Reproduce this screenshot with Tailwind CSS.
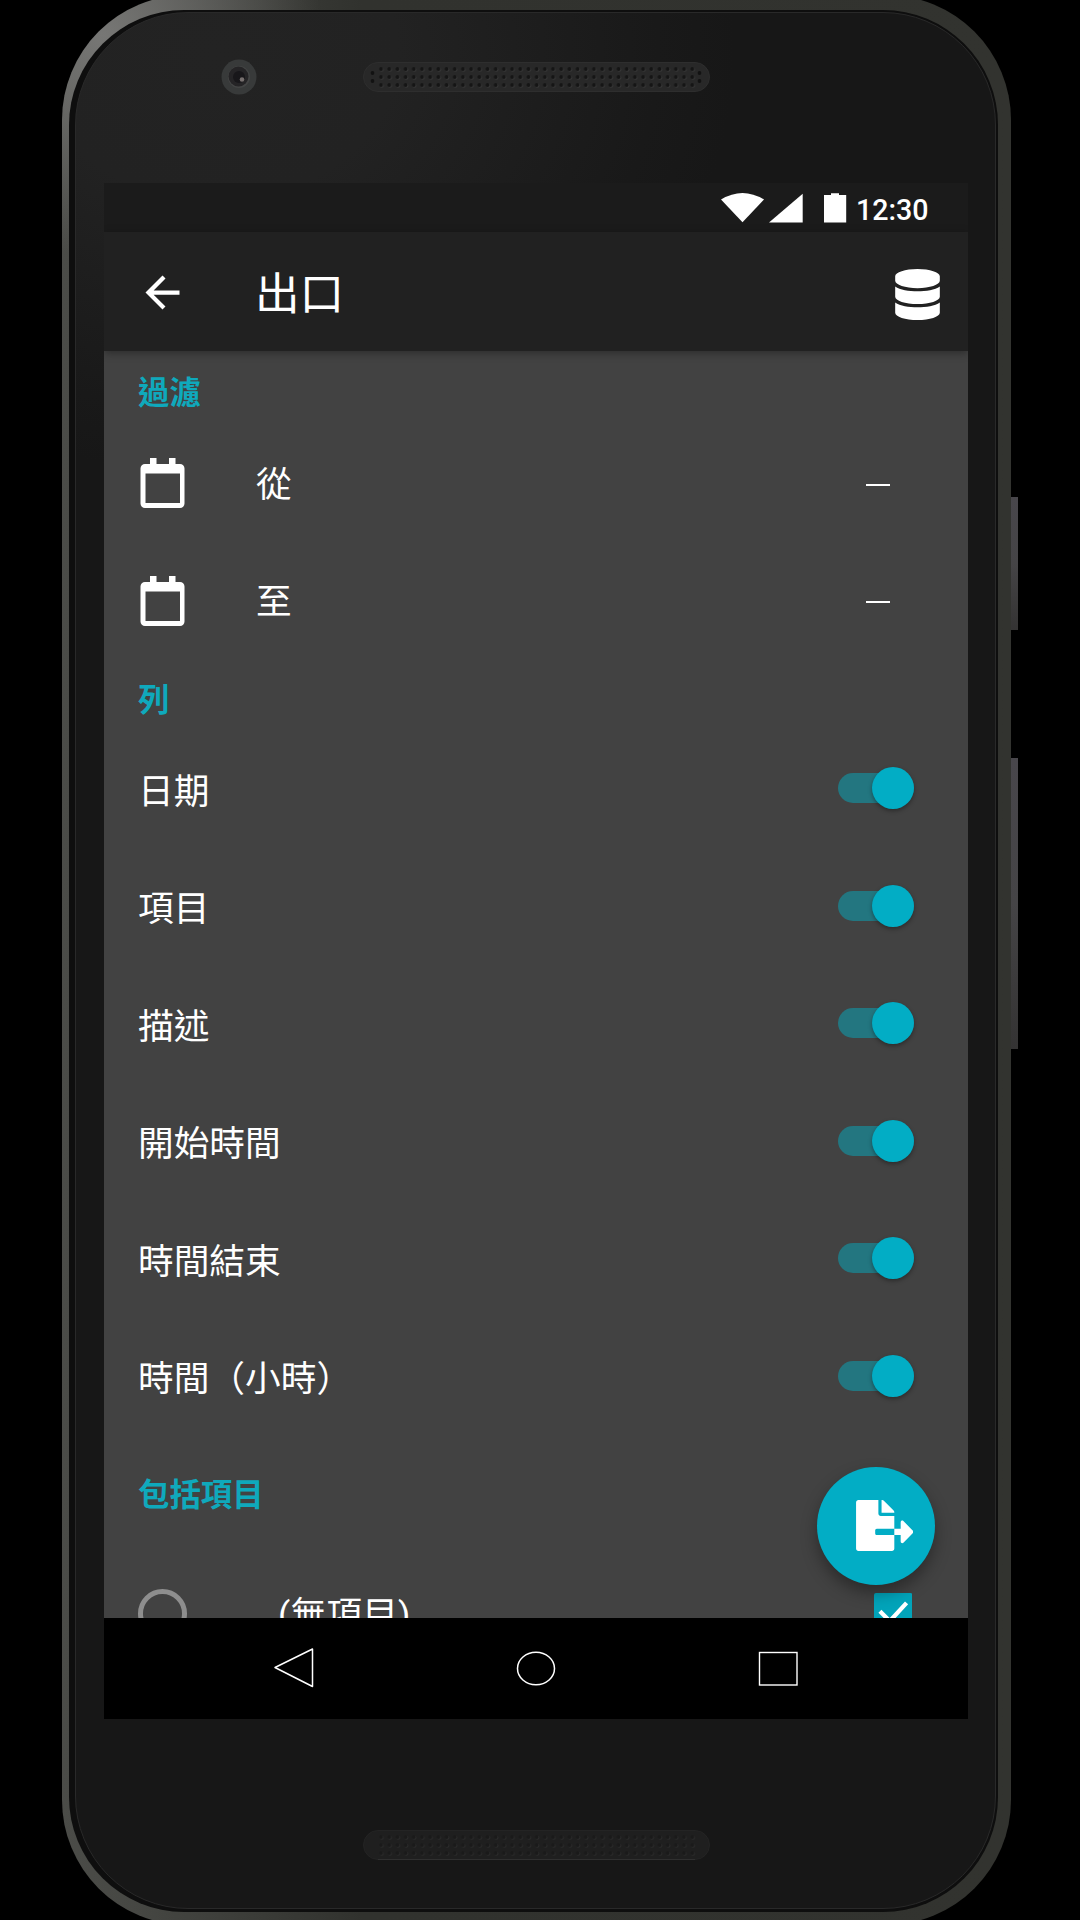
<!DOCTYPE html>
<html lang="zh-Hant">
<head>
<meta charset="utf-8">
<title>出口</title>
<script src="https://cdn.jsdelivr.net/npm/@tailwindcss/browser@4"></script>
</head>
<body class="bg-black">
<svg class="absolute size-0">
  <defs>
    <pattern id="holes" width="8.190" height="8" patternUnits="userSpaceOnUse">
      <circle cx="4.800" cy="4.800" r="2" fill="#363636"/><circle cx="4" cy="4" r="1.900" fill="#151515"/>
    </pattern>
    <symbol id="calendar" viewBox="0 0 44 50">
      <path fill="#fff" fill-rule="evenodd" d="M9.500 0h6.500v6h12.500V0h6.500v6h4.500a4.500 4.500 0 0 1 4.500 4.500v35a4.500 4.500 0 0 1-4.500 4.500h-35a4.500 4.500 0 0 1-4.500-4.500v-35a4.500 4.500 0 0 1 4.500-4.500h5zM5 15.500v29.500h34.500v-29.500z"/>
    </symbol>
  </defs>
</svg>
<div class="relative h-[1920px] w-[1080px] overflow-hidden bg-black font-[Roboto,'Noto_Sans_CJK_TC',sans-serif] text-white">
  <!-- side buttons -->
  <div class="absolute left-[1009px] top-[497px] h-[133px] w-[9px] bg-linear-to-b from-[#48464b] via-[#454446] to-[#343333]"></div>
  <div class="absolute left-[1009px] top-[758px] h-[291px] w-[9px] bg-linear-to-b from-[#48464b] via-[#454446] to-[#343333]"></div>

  <div class="relative -mt-[5px] ml-[62px] h-[1930px] w-[949px] rounded-[125px] bg-[radial-gradient(circle_at_40px_40px,#777775,#77777500_220px),linear-gradient(to_right,#4b4c48,#474844_60px,#31322e_300px,#32332f)] pt-[15px] pr-[13px] pb-[13px] pl-[7px]">
    <div class="h-full rounded-[115px] bg-[#0e0e0e] pt-[2px] pr-[2px] pb-[3px] pl-[6px]">
      <div class="flex h-full flex-col rounded-[113px] border border-[#292929] bg-[#171717] bg-[radial-gradient(ellipse_520px_420px_at_140px_40px,#232323,#222222_35%,#191919_85%,#17171700)] bg-[length:920px_500px] bg-no-repeat pl-[28px]">
        <header class="flex h-[170px] items-start">
          <svg class="mt-[46px] ml-[117px] size-[36px] shrink-0" viewBox="0 0 36 36">
            <circle cx="18" cy="18" r="17.500" fill="#383a3a"/>
            <circle cx="18" cy="18" r="11" fill="#444545"/>
            <circle cx="17.500" cy="17.500" r="10" fill="#252426"/>
            <circle cx="18" cy="18" r="6" fill="#18171a"/>
            <circle cx="21" cy="20.500" r="2.300" fill="#77706f"/>
          </svg>
          <svg class="mt-[49px] ml-[106px] h-[30px] w-[347px]" viewBox="0 0 347 30">
            <rect x=".5" y=".5" width="346" height="29" rx="14.500" fill="#282828" stroke="#2e2e2e"/>
            <g transform="translate(14 3)"><rect width="319.400" height="24" fill="url(#holes)"/></g>
            <g fill="#121212"><circle cx="9.500" cy="11" r="1.900"/><circle cx="9.500" cy="19" r="1.900"/><circle cx="336.500" cy="11" r="1.900"/><circle cx="336.500" cy="19" r="1.900"/></g>
          </svg>
        </header>

        <main class="relative flex h-[1536px] w-[864px] shrink-0 flex-col overflow-hidden bg-[#424242]">
          <!-- status bar -->
          <div class="flex h-[49px] shrink-0 items-start bg-[#1b1b1b] pl-[617px]">
            <svg class="mt-[10px] h-[30px] w-[126px]" viewBox="0 0 126 30" fill="#fff">
              <path d="M0 6.500Q21.500-6.500 43 6.500L21.500 29.200z"/>
              <path d="M48 29.500L81.700 .8v28.700z"/>
              <path d="M103 2h7V.2h8V2h7.200v27.500H103z"/>
            </svg>
            <span class="mt-[10px] ml-[9px] text-[28.600px] leading-[34px] font-medium">12:30</span>
          </div>
          <!-- app bar -->
          <div class="relative z-10 flex h-[119px] shrink-0 items-center bg-[#212121] pl-[33px] pr-[28px] shadow-[0_2px_8px_rgba(0,0,0,0.35)]">
            <svg class="mt-[2px] size-[51px]" viewBox="0 0 24 24" fill="#fff"><path d="M20 11H7.830l5.590-5.590L12 4l-8 8 8 8 1.410-1.410L7.830 13H20v-2z"/></svg>
            <h1 class="mt-[7px] ml-[67px] text-[44.600px] leading-[60px]">出口</h1>
            <svg class="mt-[5px] ml-auto h-[51px] w-[45px]" viewBox="0 0 448 512" fill="#fff"><path d="M448 73.143v45.714C448 159.143 347.667 192 224 192S0 159.143 0 118.857V73.143C0 32.857 100.333 0 224 0s224 32.857 224 73.143zM448 176v102.857C448 319.143 347.667 352 224 352S0 319.143 0 278.857V176c48.125 33.143 136.208 48.572 224 48.572S399.874 209.143 448 176zm0 160v102.857C448 479.143 347.667 512 224 512S0 479.143 0 438.857V336c48.125 33.143 136.208 48.572 224 48.572S399.874 369.143 448 336z"/></svg>
          </div>
          <!-- settings list -->
          <div class="h-[1267px] shrink-0 overflow-hidden pl-[34px] text-[35.700px] leading-[50px]">
            <h2 class="h-[75px] pt-[18px] text-[31.400px] font-bold text-[#0fa9bc]">過濾</h2>
            <div class="flex h-[117.500px] items-center pr-[78px]"><svg class="-mt-[3px] ml-[2px] h-[50px] w-[45px]"><use href="#calendar"/></svg><span class="ml-[71px]">從</span><span class="ml-auto h-[2px] w-[24px] bg-white"></span></div>
            <div class="flex h-[117.500px] items-center pr-[78px]"><svg class="-mt-[3px] ml-[2px] h-[50px] w-[45px]"><use href="#calendar"/></svg><span class="ml-[71px]">至</span><span class="ml-auto h-[2px] w-[24px] bg-white"></span></div>
            <h2 class="h-[68.500px] pt-[14.500px] text-[31.400px] font-bold text-[#0fa9bc]">列</h2>
            <div id="columns"></div>
            <h2 class="h-[120px] pt-[36.500px] text-[31.400px] font-bold text-[#0fa9bc]">包括項目</h2>
            <div class="flex h-[117.500px] items-center pr-[56px]">
              <span class="size-[49px] rounded-full border-[5px] border-[#8e8e8e]"></span>
              <span class="mt-[3px] ml-[91px] tracking-[0.2px]">(無項目)</span>
              <svg class="-mt-[3px] ml-auto size-[38.500px]" viewBox="0 0 39 39"><rect width="39" height="39" rx="2" fill="#02a4ba"/><path d="M6 18.500l10 10L33 10" fill="none" stroke="#fff" stroke-width="4.300"/></svg>
            </div>
          </div>
          <!-- export button -->
          <button class="absolute left-[712.700px] top-[1283.700px] size-[118px] rounded-full bg-[#02adc5] pl-[39px] shadow-[0_8px_16px_rgba(0,0,0,0.35)]">
            <svg class="h-[51px] w-[57.500px]" viewBox="0 0 576 512" fill="#fff"><path d="M384 121.900c0-6.300-2.500-12.400-7-16.900L279.100 7c-4.500-4.500-10.600-7-17-7H256v128h128zM571 308l-95.700-96.400c-10.100-10.100-27.400-3-27.400 11.300V288h-64v64h64v65.200c0 14.300 17.300 21.400 27.400 11.300L571 332c6.600-6.600 6.600-17.400 0-24zm-379 28v-32c0-8.800 7.200-16 16-16h176V160H248c-13.200 0-24-10.800-24-24V0H24C10.700 0 0 10.700 0 24v464c0 13.300 10.700 24 24 24h336c13.300 0 24-10.700 24-24V352H208c-8.800 0-16-7.200-16-16z"/></svg>
          </button>
          <!-- navigation bar -->
          <nav class="relative flex h-[101px] shrink-0 items-start bg-black pl-[169px]">
            <svg class="mt-[29px] size-[41px]" viewBox="0 0 41 41" fill="none" stroke="#fff" stroke-width="1.500" stroke-linejoin="round"><path d="M2 20.500L39.500 2v37.500z"/></svg>
            <svg class="mt-[33px] ml-[202px] h-[35px] w-[40px]" viewBox="0 0 40 35"><ellipse cx="20" cy="17.500" rx="18.500" ry="16.200" fill="none" stroke="#fff" stroke-width="1.500"/></svg>
            <svg class="mt-[33px] ml-[202px] h-[35px] w-[40px]" viewBox="0 0 40 35"><rect x="1.500" y="1.500" width="37.500" height="32.500" fill="none" stroke="#fff" stroke-width="1.400"/></svg>
          </nav>
        </main>

        <footer class="pt-[111px] pl-[259px]">
          <svg class="h-[30px] w-[347px]" viewBox="0 0 347 30">
            <rect x=".5" y=".5" width="346" height="29" rx="14.500" fill="#1f1f1f" stroke="#242424"/>
            <g transform="translate(14 3)" opacity=".5"><rect width="319.400" height="24" fill="url(#holes)"/></g>
            <path d="M15 29.500h317" stroke="#303030"/>
          </svg>
        </footer>
      </div>
    </div>
  </div>
</div>
<script>
  document.getElementById('columns').innerHTML =
    ['日期', '項目', '描述', '開始時間', '時間結束', '時間（小時）'].map(label => `
      <div class="flex h-[117.500px] items-center pr-[54px]">
        <span class="mt-[7px]">${label}</span>
        <span class="ml-auto flex h-[30px] w-[76px] items-center justify-end rounded-full bg-[#237680]">
          <span class="size-[42px] shrink-0 rounded-full bg-[#02adc5] shadow-[0_2px_4px_rgba(0,0,0,0.35)]"></span>
        </span>
      </div>`).join('');
</script>
</body>
</html>
